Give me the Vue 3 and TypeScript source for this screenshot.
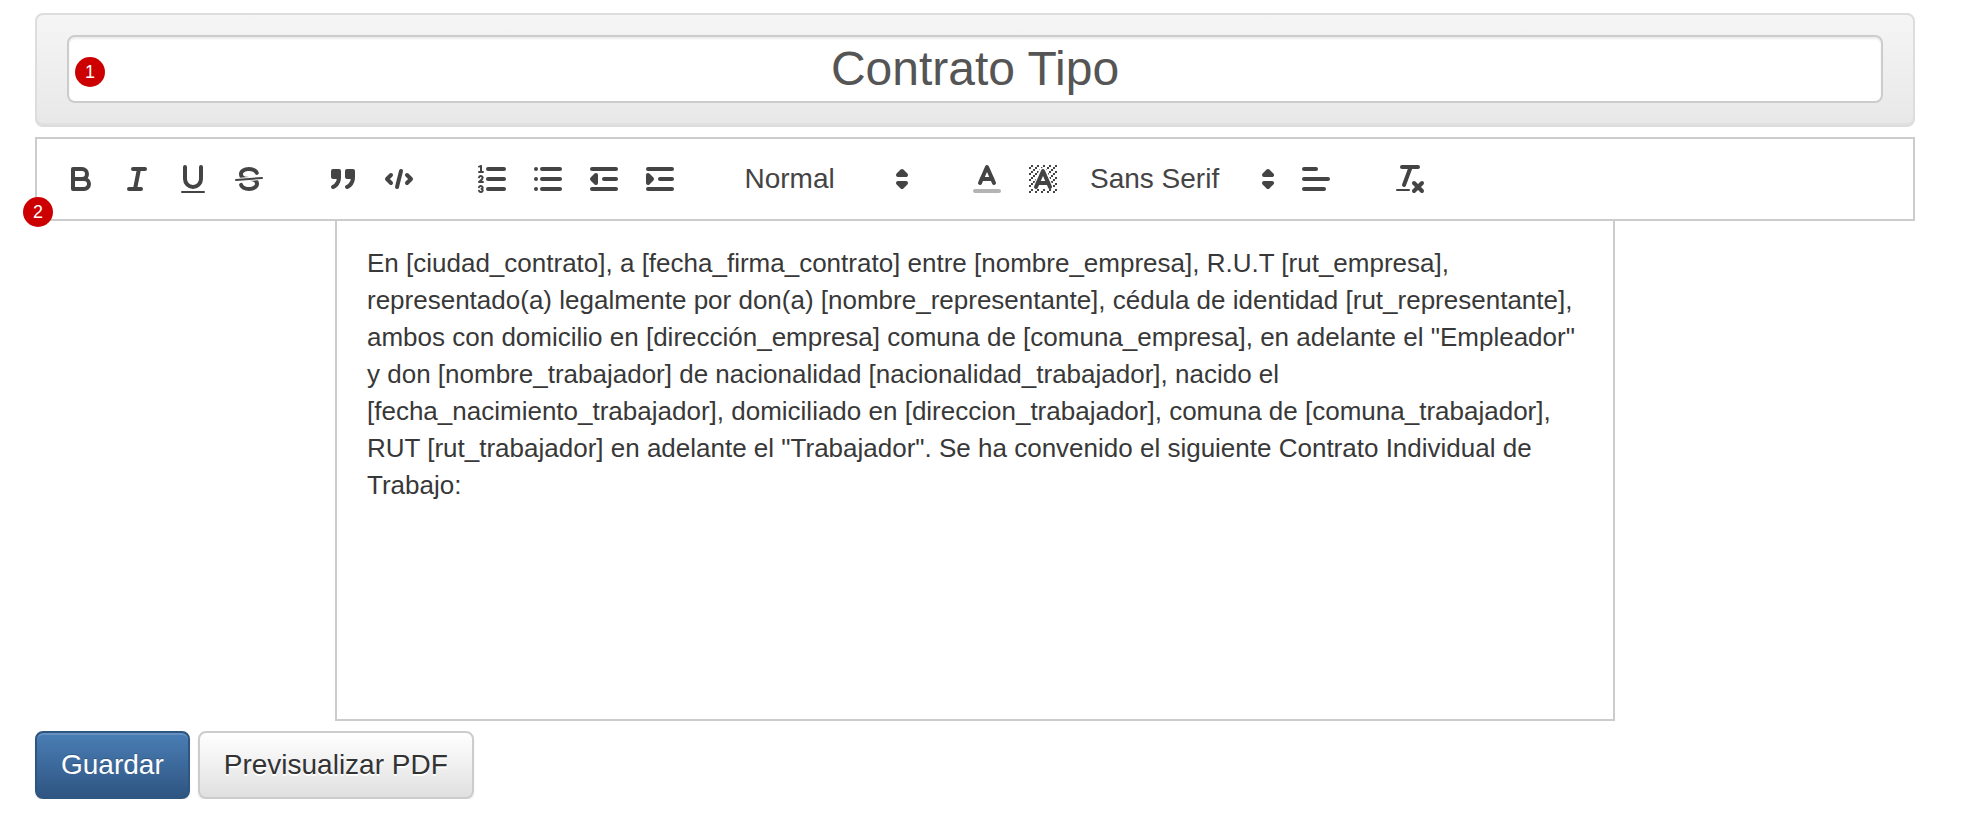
<script setup lang="ts">
const cells: { x: number; y: number }[] = []
for (let y = 2; y <= 15; y++) {
  for (let x = 2; x <= 15; x++) {
    if ((x + y) % 3 === 2) cells.push({ x, y })
  }
}
</script>

<template>
  <div class="page">
    <div class="well">
      <div class="title-input">
        <span class="title-text">Contrato Tipo</span>
        <span class="badge badge-one">1</span>
      </div>
    </div>

    <div class="toolbar">
      <span class="badge badge-two">2</span>
      <div class="group">
        <span class="btn"><svg viewBox="0 0 18 18"><path class="s" d="M5,4H9.5A2.5,2.5,0,0,1,12,6.5v0A2.5,2.5,0,0,1,9.5,9H5A0,0,0,0,1,5,9V4A0,0,0,0,1,5,4Z" /><path class="s" d="M5,9h5.5A2.5,2.5,0,0,1,13,11.5v0A2.5,2.5,0,0,1,10.5,14H5a0,0,0,0,1,0,0V9A0,0,0,0,1,5,9Z" /></svg></span>
        <span class="btn"><svg viewBox="0 0 18 18"><line class="s" x1="7" x2="13" y1="4" y2="4" /><line class="s" x1="5" x2="11" y1="14" y2="14" /><line class="s" x1="8" x2="10" y1="14" y2="4" /></svg></span>
        <span class="btn"><svg viewBox="0 0 18 18"><path class="s" d="M5,3V9a4.012,4.012,0,0,0,4,4H9a4.012,4.012,0,0,0,4-4V3" /><rect class="f" height="1" rx=".5" ry=".5" width="12" x="3" y="15" /></svg></span>
        <span class="btn"><svg viewBox="0 0 18 18"><line class="s thin" x1="15.5" x2="2.5" y1="8.5" y2="9.5" /><path class="f" d="M9.007,8C6.542,7.791,6,7.519,6,6.5,6,5.792,7.283,5,9,5c1.571,0,2.765.679,2.969,1.309a1,1,0,0,0,1.9-.617C13.356,4.106,11.354,3,9,3,6.2,3,4,4.538,4,6.5a3.2,3.2,0,0,0,.5,1.843Z" /><path class="f" d="M8.984,10C11.457,10.208,12,10.479,12,11.5c0,.708-1.283,1.5-3,1.5-1.571,0-2.765-.679-2.969-1.309a1,1,0,1,0-1.9.617C4.644,13.894,6.646,15,9,15c2.8,0,5-1.538,5-3.5a3.2,3.2,0,0,0-.5-1.843Z" /></svg></span>
      </div>
      <div class="group">
        <span class="btn"><svg viewBox="0 0 18 18"><rect class="f s" height="3" width="3" x="4" y="5" /><rect class="f s" height="3" width="3" x="11" y="5" /><path class="s" d="M7,8c0,4.031-3,5-3,5" /><path class="s" d="M14,8c0,4.031-3,5-3,5" /></svg></span>
        <span class="btn"><svg viewBox="0 0 18 18"><polyline class="s" points="5 7 3 9 5 11" /><polyline class="s" points="13 7 15 9 13 11" /><line class="s" x1="10" x2="8" y1="5" y2="13" /></svg></span>
      </div>
      <div class="group">
        <span class="btn"><svg viewBox="0 0 18 18"><line class="s" x1="7" x2="15" y1="4" y2="4" /><line class="s" x1="7" x2="15" y1="9" y2="9" /><line class="s" x1="7" x2="15" y1="14" y2="14" /><line class="s thin" x1="2.5" x2="4.5" y1="5.5" y2="5.5" /><path class="f" d="M3.5,6A0.5,0.5,0,0,1,3,5.5V3.085l-0.276.138A0.5,0.5,0,0,1,2.053,3c-0.124-.247-0.023-0.324.224-0.447l1-.5A0.5,0.5,0,0,1,4,2.5v3A0.5,0.5,0,0,1,3.5,6Z" /><path class="s thin" d="M4.5,10.5h-2c0-.234,1.85-1.076,1.85-2.234A0.959,0.959,0,0,0,2.5,8.156" /><path class="s thin" d="M2.5,14.846a0.959,0.959,0,0,0,1.85-.109A0.7,0.7,0,0,0,3.75,14a0.688,0.688,0,0,0,.6-0.736,0.959,0.959,0,0,0-1.85-.109" /></svg></span>
        <span class="btn"><svg viewBox="0 0 18 18"><line class="s" x1="6" x2="15" y1="4" y2="4" /><line class="s" x1="6" x2="15" y1="9" y2="9" /><line class="s" x1="6" x2="15" y1="14" y2="14" /><line class="s" x1="3" x2="3" y1="4" y2="4" /><line class="s" x1="3" x2="3" y1="9" y2="9" /><line class="s" x1="3" x2="3" y1="14" y2="14" /></svg></span>
        <span class="btn"><svg viewBox="0 0 18 18"><line class="s" x1="3" x2="15" y1="14" y2="14" /><line class="s" x1="3" x2="15" y1="4" y2="4" /><line class="s" x1="9" x2="15" y1="9" y2="9" /><polyline class="f s" points="5 7 5 11 3 9 5 7" /></svg></span>
        <span class="btn"><svg viewBox="0 0 18 18"><line class="s" x1="3" x2="15" y1="14" y2="14" /><line class="s" x1="3" x2="15" y1="4" y2="4" /><line class="s" x1="9" x2="15" y1="9" y2="9" /><polyline class="f s" points="3 7 3 11 5 9 3 7" /></svg></span>
      </div>
      <div class="group">
        <span class="picker picker-header">
          <span>Normal</span>
          <svg class="arrows" viewBox="0 0 18 18"><polygon class="f s" points="7 11 9 13 11 11 7 11" /><polygon class="f s" points="7 7 9 5 11 7 7 7" /></svg>
        </span>
      </div>
      <div class="group">
        <span class="btn"><svg viewBox="0 0 18 18"><line class="s grey" x1="3" x2="15" y1="15" y2="15" /><polyline class="s" points="5.5 11 9 3 12.5 11" /><line class="s" x1="11.63" x2="6.38" y1="9" y2="9" /></svg></span>
        <span class="btn"><svg viewBox="0 0 18 18"><rect v-for="c in cells" :key="c.x + '-' + c.y" class="f" :x="c.x" :y="c.y" width="1" height="1" /><polygon class="halo" points="9 3 10.83 4.2 14.4 14 3.6 14 7.17 4.2" /><polyline class="s" points="5.5 13 9 5 12.5 13" /><line class="s" x1="11.63" x2="6.38" y1="11" y2="11" /></svg></span>
        <span class="picker picker-font">
          <span>Sans Serif</span>
          <svg class="arrows" viewBox="0 0 18 18"><polygon class="f s" points="7 11 9 13 11 11 7 11" /><polygon class="f s" points="7 7 9 5 11 7 7 7" /></svg>
        </span>
        <span class="btn"><svg viewBox="0 0 18 18"><line class="s" x1="3" x2="15" y1="9" y2="9" /><line class="s" x1="3" x2="13" y1="14" y2="14" /><line class="s" x1="3" x2="9" y1="4" y2="4" /></svg></span>
      </div>
      <div class="group">
        <span class="btn"><svg viewBox="0 0 18 18"><line class="s" x1="5" x2="13" y1="3" y2="3" /><line class="s" x1="6" x2="9.35" y1="12" y2="3" /><line class="s" x1="11" x2="15" y1="11" y2="15" /><line class="s" x1="15" x2="11" y1="11" y2="15" /><rect class="f" height="1" rx=".5" ry=".5" width="7" x="2" y="14" /></svg></span>
      </div>
    </div>

    <div class="editor">
      En [ciudad_contrato], a [fecha_firma_contrato] entre [nombre_empresa], R.U.T [rut_empresa], representado(a) legalmente por don(a) [nombre_representante], cédula de identidad [rut_representante], ambos con domicilio en [dirección_empresa] comuna de [comuna_empresa], en adelante el "Empleador" y don [nombre_trabajador] de nacionalidad [nacionalidad_trabajador], nacido el [fecha_nacimiento_trabajador], domiciliado en [direccion_trabajador], comuna de [comuna_trabajador], RUT [rut_trabajador] en adelante el "Trabajador". Se ha convenido el siguiente Contrato Individual de Trabajo:
    </div>

    <div class="actions">
      <button class="action primary" type="button">Guardar</button>
      <button class="action secondary" type="button">Previsualizar PDF</button>
    </div>
  </div>
</template>

<style scoped>
.page {
  box-sizing: border-box;
  width: 1974px;
  padding: 13px 59px 0 35px;
  font-family: "Liberation Sans", Arial, sans-serif;
  color: #333;
}
.well {
  box-sizing: border-box;
  height: 114px;
  padding: 20px 30px;
  border: 2px solid #ddd;
  border-radius: 8px;
  background: linear-gradient(to bottom, #f5f5f5, #e8e8e8);
  box-shadow: inset 0 -2px 0 #e0e0e0;
}
.title-input {
  position: relative;
  box-sizing: border-box;
  height: 68px;
  border: 2px solid #ccc;
  border-radius: 8px;
  background: #fff;
  box-shadow: inset 0 2px 2px rgba(0, 0, 0, 0.075);
  display: flex;
  align-items: center;
  justify-content: center;
}
.title-text {
  font-size: 48px;
  line-height: 64px;
  color: #555;
}
.badge {
  position: absolute;
  width: 30px;
  height: 30px;
  border-radius: 50%;
  background: #c00;
  color: #fff;
  font-size: 18px;
  line-height: 30px;
  text-align: center;
}
.badge-one {
  left: 6px;
  top: 20px;
}
.badge-two {
  left: -14px;
  top: 58px;
}
.toolbar {
  position: relative;
  box-sizing: border-box;
  height: 84px;
  margin-top: 10px;
  padding: 16px;
  border: 2px solid #ccc;
  display: flex;
  gap: 37.5px;
}
.group {
  display: flex;
}
.btn {
  box-sizing: border-box;
  width: 56px;
  height: 48px;
  padding: 6px 10px;
  display: block;
}
.btn svg {
  display: block;
  width: 36px;
  height: 36px;
}
.s {
  fill: none;
  stroke: #444;
  stroke-width: 2;
  stroke-linecap: round;
  stroke-linejoin: round;
  stroke-miterlimit: 10;
}
.thin {
  stroke-width: 1;
}
.f {
  fill: #444;
}
.halo {
  fill: #fff;
}
.grey {
  stroke: #b4b4b4;
}
.picker {
  position: relative;
  box-sizing: border-box;
  height: 48px;
  padding-left: 19px;
  font-size: 28px;
  line-height: 48px;
  color: #444;
  display: block;
}
.picker-header {
  width: 196px;
}
.picker-font {
  width: 217px;
}
.arrows {
  position: absolute;
  right: 2px;
  top: 50%;
  width: 36px;
  height: 36px;
  margin-top: -18px;
}
.editor {
  box-sizing: border-box;
  width: 1280px;
  height: 500px;
  margin-left: 300px;
  padding: 24px 30px;
  border: 2px solid #ccc;
  border-top: 0;
  font-size: 26px;
  line-height: 36.92px;
  color: #383838;
}
.actions {
  display: flex;
  gap: 8px;
  margin-top: 10px;
}
.action {
  box-sizing: border-box;
  height: 68px;
  padding: 12px 24px;
  border-radius: 8px;
  font-family: inherit;
  font-size: 28px;
  line-height: 40px;
}
.primary {
  border: 2px solid #2e5680;
  background: linear-gradient(to bottom, #4a7eb5, #2f5582);
  color: #fff;
  text-shadow: 0 -1px 0 rgba(0, 0, 0, 0.2);
  box-shadow: inset 0 2px 0 rgba(255, 255, 255, 0.15), 0 2px 2px rgba(0, 0, 0, 0.075);
}
.secondary {
  border: 2px solid #ccc;
  background: linear-gradient(to bottom, #fff, #e0e0e0);
  color: #333;
  text-shadow: 0 2px 0 #fff;
  box-shadow: inset 0 2px 0 rgba(255, 255, 255, 0.15), 0 2px 2px rgba(0, 0, 0, 0.075);
}
</style>

<style>
html,
body {
  margin: 0;
  background: #fff;
}
</style>
